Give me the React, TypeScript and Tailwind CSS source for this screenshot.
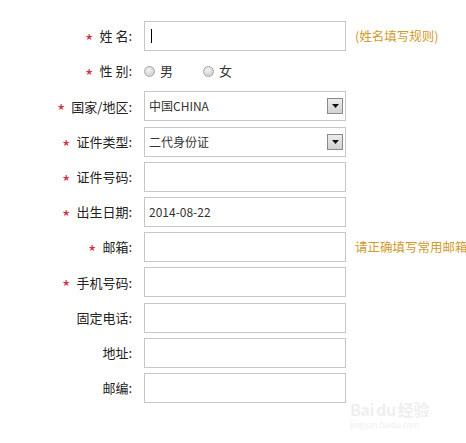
import React from 'react'

interface Row {
  label: string
  required: boolean
  kind: 'text' | 'radio' | 'select'
  value?: string
  hint?: string
  caret?: boolean
}

const rows: Row[] = [
  { label: '姓 名:', required: true, kind: 'text', hint: '(姓名填写规则)', caret: true },
  { label: '性 别:', required: true, kind: 'radio' },
  { label: '国家/地区:', required: true, kind: 'select', value: '中国CHINA' },
  { label: '证件类型:', required: true, kind: 'select', value: '二代身份证' },
  { label: '证件号码:', required: true, kind: 'text' },
  { label: '出生日期:', required: true, kind: 'text', value: '2014-08-22' },
  { label: '邮箱:', required: true, kind: 'text', hint: '请正确填写常用邮箱地址' },
  { label: '手机号码:', required: true, kind: 'text' },
  { label: '固定电话:', required: false, kind: 'text' },
  { label: '地址:', required: false, kind: 'text' },
  { label: '邮编:', required: false, kind: 'text' },
]

function Radio({ label }: { label: string }) {
  return (
    <span className="flex items-center">
      <span className="w-[11px] h-[11px] rounded-full border border-[#a8a8a8] bg-[radial-gradient(circle_at_40%_35%,#f4f4f4,#c4c4c4)]" />
      <span className="ml-[5px] text-[13px]">{label}</span>
    </span>
  )
}

function Field({ row }: { row: Row }) {
  if (row.kind === 'radio') {
    return (
      <div className="flex items-center gap-[30px] w-[202px] h-[30px]">
        <Radio label="男" />
        <Radio label="女" />
      </div>
    )
  }
  return (
    <div className="relative flex items-center w-[202px] h-[30px] border border-[#c6c6c6] bg-white pl-[4px]">
      {row.caret && <span className="w-px h-[14px] bg-black ml-[2px]" />}
      {row.value && <span>{row.value}</span>}
      {row.kind === 'select' && (
        <span className="absolute right-[2px] top-[6px] w-[16px] h-[16px] border border-[#8a8a8a] bg-[linear-gradient(#ececec,#d2d2d2)] flex items-center justify-center">
          <svg width="7" height="4" viewBox="0 0 7 4">
            <path d="M0 0h7L3.5 4z" fill="#111" />
          </svg>
        </span>
      )}
    </div>
  )
}

export default function App() {
  return (
    <div
      className="relative w-[466px] h-[443px] bg-white overflow-hidden text-[12px] text-[#333]"
      style={{ fontFamily: '"Noto Sans CJK SC", "Liberation Sans", sans-serif' }}
    >
      <div className="flex flex-col gap-[5.2px] pt-[21px]">
        {rows.map((row) => (
          <div key={row.label} className="flex items-center h-[30px]">
            <div className="shrink-0 w-[132px] flex items-center justify-end whitespace-nowrap text-[13px] text-[#222]">
              {row.required && (
                <span className="text-[#cc3347] text-[18px] leading-none mr-[6px] translate-y-[4px]">*</span>
              )}
              {row.label}
            </div>
            <div className="shrink-0 ml-[12px]">
              <Field row={row} />
            </div>
            {row.hint && (
              <span className="shrink-0 ml-[9px] whitespace-nowrap text-[12.5px] text-[#d09a2c]">
                {row.hint}
              </span>
            )}
          </div>
        ))}
      </div>
      <div className="absolute left-[350px] top-[401px] text-[#efefef] leading-none select-none">
        <div className="text-[16px] font-bold tracking-tight">
          Bai<span className="mx-[2px]">du</span>经验
        </div>
        <div className="text-[8px] mt-[4px]">jingyan.baidu.com</div>
      </div>
    </div>
  )
}
